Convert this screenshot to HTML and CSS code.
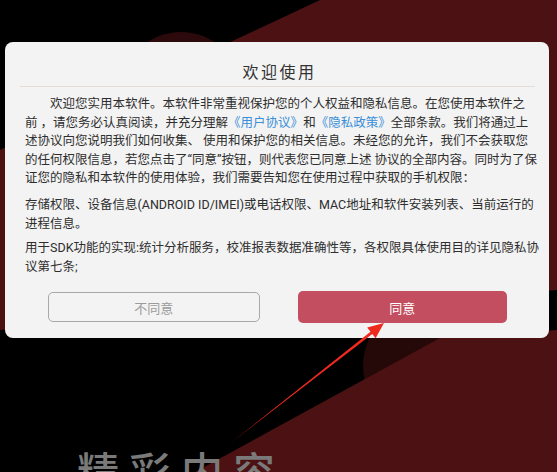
FILE: index.html
```html
<!DOCTYPE html>
<html lang="zh-CN">
<head>
<meta charset="utf-8">
<title>欢迎使用</title>
<link rel="stylesheet" href="styles.css">
</head>
<body>
<div class="stage">
  <svg class="backdrop" width="557" height="472" viewBox="0 0 557 472">
    <rect width="557" height="472" fill="#000"/>
    <circle cx="181" cy="92" r="60" fill="#2c0a0b"/>
    <circle cx="427" cy="366" r="64" fill="#250808"/>
    <polygon points="320,0 557,0 557,290 0,330 0,150" fill="#4c1113"/>
    <polygon points="195,472 440,338 557,330 557,472" fill="#4c1113"/>
  </svg>
  <div class="splash-title">精彩内容</div>

  <div class="dialog">
    <div class="dialog-title">欢迎使用</div>
    <div class="divider"></div>
    <div class="dialog-body">
      <p class="para first">欢迎您实用本软件。本软件非常重视保护您的个人权益和隐私信息。在您使用本软件之<br>前 ，请您务必认真阅读，并充分理解<span class="link">《用户协议》</span>和<span class="link">《隐私政策》</span>全部条款。我们将通过上<br>述协议向您说明我们如何收集、 使用和保护您的相关信息。未经您的允许，我们不会获取您<br>的任何权限信息，若您点击了“同意”按钮，则代表您已同意上述 协议的全部内容。同时为了保<br>证您的隐私和本软件的使用体验，我们需要告知您在使用过程中获取的手机权限：</p>
      <p class="para second">存储权限、设备信息(ANDROID ID/IMEI)或电话权限、MAC地址和软件安装列表、当前运行的<br>进程信息。</p>
      <p class="para third">用于SDK功能的实现:统计分析服务，校准报表数据准确性等，各权限具体使用目的详见隐私协<br>议第七条;</p>
    </div>
    <div class="actions">
      <button class="btn btn-decline">不同意</button>
      <button class="btn btn-accept">同意</button>
    </div>
  </div>

  <svg class="pointer" width="557" height="472" viewBox="0 0 557 472">
    <polygon points="232,442 370.5,331.7 367.2,327.6 384,323 375.6,338.2 372.3,334.1" fill="#ee2a1f"/>
  </svg>
</div>
</body>
</html>
```

FILE: styles.css
```css
html, body {
  margin: 0;
  padding: 0;
  background: #000;
}

.stage {
  position: relative;
  width: 557px;
  height: 472px;
  overflow: hidden;
  font-family: Roboto, "Noto Sans CJK SC", sans-serif;
}

.backdrop {
  position: absolute;
  left: 0;
  top: 0;
  display: block;
}

.splash-title {
  position: absolute;
  left: 77px;
  top: 445px;
  font-family: "Noto Sans CJK SC", sans-serif;
  font-size: 42px;
  font-weight: 500;
  line-height: 50px;
  letter-spacing: 10px;
  color: #7a7a7a;
  white-space: nowrap;
}

.dialog {
  position: absolute;
  left: 5px;
  top: 42px;
  width: 544px;
  height: 296px;
  background: #f3f3f3;
  border-radius: 8px;
  display: flex;
  flex-direction: column;
  box-sizing: border-box;
}

.dialog-title {
  margin-top: 18px;
  height: 22px;
  line-height: 22px;
  text-align: center;
  font-family: "Noto Sans CJK SC", sans-serif;
  font-size: 16px;
  letter-spacing: 2.5px;
  padding-left: 5px;
  color: #333;
}

.divider {
  margin: 4px 14px 0 15px;
  height: 1px;
  background: #e4ddd6;
}

.dialog-body {
  padding: 8px 20px 0 20px;
  font-size: 12.5px;
  line-height: 18.6px;
  color: #2e2e2e;
  white-space: nowrap;
}

.para {
  margin: 0;
}

.para.first {
  text-indent: 2em;
}

.para.second {
  margin-top: 8.5px;
}

.para.third {
  margin-top: 5.5px;
}

.link {
  color: #3a8fd8;
}

.actions {
  margin-top: auto;
  display: flex;
  gap: 38px;
  padding: 0 42px 15px 43px;
}

.btn {
  flex: 1;
  height: 32px;
  border-radius: 5px;
  font-family: "Noto Sans CJK SC", sans-serif;
  font-size: 13px;
  padding: 0;
  margin: 0;
}

.btn-decline {
  height: 30px;
  margin-top: 1px;
  background: #f3f3f3;
  border: 1px solid #a8a8a8;
  color: #9c9c9c;
}

.btn-accept {
  background: #c24e5f;
  border: none;
  color: #fff;
}

.pointer {
  position: absolute;
  left: 0;
  top: 0;
  display: block;
  pointer-events: none;
}
```
